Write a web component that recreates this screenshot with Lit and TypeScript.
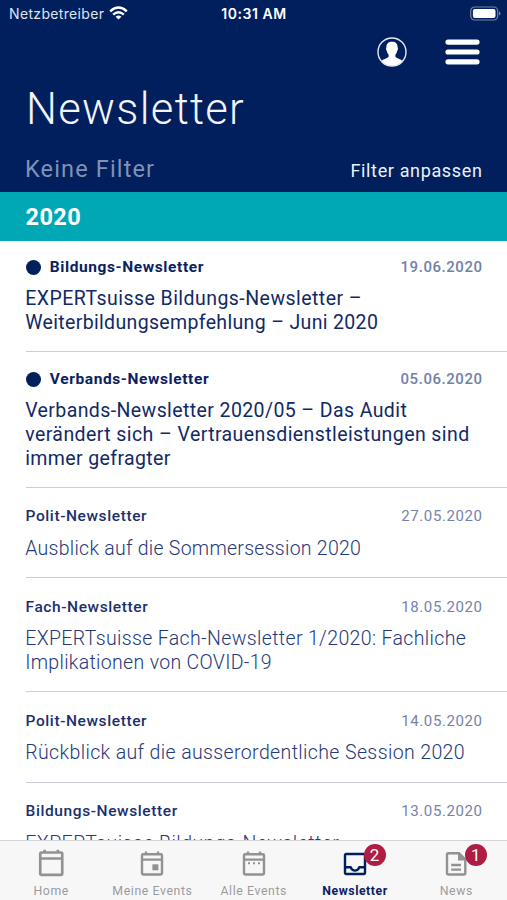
import { LitElement, html, css, svg, nothing } from "lit";
import { classMap } from "lit/directives/class-map.js";

interface Item {
  category: string;
  date: string;
  lines: string[];
  spacing: number[];
  unread?: boolean;
}

const ITEMS: Item[] = [
  { category: "Bildungs-Newsletter", date: "19.06.2020", unread: true,
    lines: ["EXPERTsuisse Bildungs-Newsletter –", "Weiterbildungsempfehlung – Juni 2020"], spacing: [0.46, 0.34] },
  { category: "Verbands-Newsletter", date: "05.06.2020", unread: true,
    lines: ["Verbands-Newsletter 2020/05 – Das Audit", "verändert sich – Vertrauensdienstleistungen sind", "immer gefragter"], spacing: [0.4, 0.42, 0.38] },
  { category: "Polit-Newsletter", date: "27.05.2020",
    lines: ["Ausblick auf die Sommersession 2020"], spacing: [0.27] },
  { category: "Fach-Newsletter", date: "18.05.2020",
    lines: ["EXPERTsuisse Fach-Newsletter 1/2020: Fachliche", "Implikationen von COVID-19"], spacing: [0.36, 0.32] },
  { category: "Polit-Newsletter", date: "14.05.2020",
    lines: ["Rückblick auf die ausserordentliche Session 2020"], spacing: [0.38] },
  { category: "Bildungs-Newsletter", date: "13.05.2020",
    lines: ["EXPERTsuisse Bildungs-Newsletter"], spacing: [0.46] },
];

const calendar = svg`<path d="M3.2 3.2H20.8Q22 3.2 22 4.4V22.3Q22 23.5 20.8 23.5H3.2Q2 23.5 2 22.3V4.4Q2 3.2 3.2 3.2ZM2 8.6H22M6 0.6V3M18 0.6V3"/>`;
const ICONS = {
  home: svg`${calendar}`,
  mine: svg`${calendar}<path class="solid" d="M12.4 13.3h6v6h-6z"/>`,
  all: svg`${calendar}<path class="solid" d="M6 11.2h2v2h-2zM11 11.2h2v2h-2zM16 11.2h2v2h-2z"/>`,
  inbox: svg`<path d="M3.4 3H20.6Q22 3 22 4.4V21.6Q22 23 20.6 23H3.4Q2 23 2 21.6V4.4Q2 3 3.4 3Z"/><path d="M2 16.3H7.6Q9 19.6 12 19.6Q15 19.6 16.4 16.3H22"/>`,
  news: svg`<path d="M4.5 2.2H15L21.3 8.6V22Q21.3 23.5 19.8 23.5H4.5Q3 23.5 3 22V3.7Q3 2.2 4.5 2.2Z"/><path class="solid" d="M14 2L21.5 9.6H14Z"/><path d="M7.2 14H17M7.2 18.6H17"/>`,
};

const TABS = [
  { label: "Home", icon: ICONS.home, cls: "home" },
  { label: "Meine Events", icon: ICONS.mine, cls: "mine" },
  { label: "Alle Events", icon: ICONS.all, cls: "all" },
  { label: "Newsletter", icon: ICONS.inbox, cls: "active", badge: 2 },
  { label: "News", icon: ICONS.news, cls: "news", badge: 1 },
];

class NewsletterRow extends LitElement {
  static properties = { item: { attribute: false } };
  declare item: Item;
  static styles = css`
    :host { display: block; padding-left: 25.5px; }
    .row { padding: 18.4px 25px 16.6px 0; border-bottom: 1px solid #c9cddd; }
    .row.unread { padding: 16.7px 25px 16.3px 0; }
    .meta { display: flex; align-items: center; height: 20px; font-size: 15.5px; line-height: 20px; }
    .dot { width: 15px; height: 15px; border-radius: 50%; background: #001f5c; margin-right: 9.3px; }
    .category { font-weight: 500; letter-spacing: 0.6px; color: #1a2f6b; }
    .date { margin-left: auto; font-size: 15px; letter-spacing: 0.6px; color: #7482ac; margin-right: -0.6px; }
    .unread .category { font-weight: 700; letter-spacing: 0.6px; color: #0a225f; }
    .unread .date { font-weight: 500; letter-spacing: 0.55px; color: #7280a8; }
    .title { margin-top: 10.5px; font-size: 19.5px; line-height: 23.8px; font-weight: 300; color: #24387a; white-space: nowrap; }
    .unread .title { margin-top: 10.3px; font-weight: 400; color: #112966; }
    .line { display: block; margin-left: -0.3px; }
  `;
  render() {
    const { category, date, lines, spacing, unread } = this.item;
    return html`<div class=${classMap({ row: true, unread: !!unread })}>
      <div class="meta">
        ${unread ? html`<span class="dot"></span>` : nothing}
        <span class="category">${category}</span>
        <span class="date">${date}</span>
      </div>
      <div class="title">
        ${lines.map((l, i) => html`<span class="line" style="letter-spacing:${spacing[i]}px">${l}</span>`)}
      </div>
    </div>`;
  }
}
customElements.define("newsletter-row", NewsletterRow);

class AppRoot extends LitElement {
  static styles = css`
    :host { display: flex; flex-direction: column; height: 900px; overflow: hidden; background: #fff; font-family: Roboto, "Liberation Sans", sans-serif; }
    header { background: #001f5c; color: #fff; height: 192px; flex: none; display: flex; flex-direction: column; }
    .status { display: grid; grid-template-columns: 1fr auto 1fr; align-items: center; height: 27px; padding: 0 6px 0 9px; font: 400 14px/27px Inter, sans-serif; }
    .carrier { display: flex; align-items: center; gap: 5px; letter-spacing: 0.34px; color: #dfe4f0; }
    .wifi { width: 19px; height: 14px; margin-top: -2px; }
    .time { font-weight: 600; letter-spacing: 0.55px; margin-right: 2px; }
    .battery { justify-self: end; width: 31px; height: 15px; }
    .actions { display: flex; justify-content: flex-end; align-items: center; gap: 38.5px; height: 50px; padding-right: 27px; }
    .user { width: 30px; height: 30px; }
    .burger { width: 35px; height: 26px; }
    h1 { margin: 2px 0 0 26px; font-weight: 300; font-size: 43.6px; line-height: 62px; letter-spacing: 1.3px; color: #f2f4fa; }
    .filters { display: flex; justify-content: space-between; align-items: baseline; padding: 0 24.5px 0 25px; height: 51px; line-height: 56px; }
    .state { font-size: 23.5px; letter-spacing: 1.15px; color: #8291b6; }
    .adjust { font-size: 18px; letter-spacing: 0.64px; color: #eef1f8; }
    .year { flex: none; height: 48.5px; background: #00a8b5; color: #fff; font-weight: 700; font-size: 23.5px; line-height: 51px; letter-spacing: 0.4px; padding-left: 25.5px; }
    main { flex: 1; min-height: 0; overflow: hidden; }
    nav { flex: none; height: 60px; box-sizing: border-box; border-top: 1px solid #d5d5d9; background: #f7f7f8; display: grid; grid-template-columns: repeat(5, 1fr); padding-left: 0.5px; }
    .tab { display: flex; flex-direction: column; align-items: center; color: #929294; }
    .glyph { position: relative; height: 40px; display: flex; align-items: center; justify-content: center; padding-top: 4px; box-sizing: border-box; }
    .icon { width: 24px; height: 25px; fill: none; stroke: currentColor; stroke-width: 2.4; overflow: visible; }
    .home .icon { width: 26.5px; height: 27.5px; }
    .icon .solid { fill: currentColor; stroke: none; }
    .label { font-size: 12.3px; line-height: 20px; letter-spacing: 0.6px; color: #9b9b9d; }
    .active { color: #001f5c; }
    .active .label { font-weight: 700; color: #0a225f; letter-spacing: 0.55px; }
    .badge { position: absolute; left: 20.5px; top: 3px; width: 22px; height: 22px; border-radius: 50%; background: #ae1d43; color: #fff; font: 400 17px/22px Roboto, sans-serif; text-align: center; }
  `;
  render() {
    return html`
      <header>
        <div class="status">
          <span class="carrier">Netzbetreiber
            <svg class="wifi" viewBox="0 0 19 14" fill="none" stroke="#fff" stroke-width="2.5">
              <path d="M1.2 5.3Q9.5 -2.3 17.8 5.3"/><path d="M4.2 8.6Q9.5 3.8 14.8 8.6"/>
              <path d="M9.5 13.6L6.6 10.7Q9.5 8.4 12.4 10.7Z" fill="#fff" stroke="none"/>
            </svg>
          </span>
          <span class="time">10:31 AM</span>
          <svg class="battery" viewBox="0 0 31 15">
            <rect x="0.7" y="1" width="27" height="13" rx="4" fill="none" stroke="#75839f" stroke-width="1.2"/>
            <rect x="2.9" y="3.1" width="22.6" height="8.8" rx="2" fill="#fff"/>
            <path d="M29 5.4Q30.6 6 30.6 7.5T29 9.6Z" fill="#75839f"/>
          </svg>
        </div>
        <div class="actions">
          <svg class="user" viewBox="0 0 30 30">
            <circle cx="15" cy="15" r="14" fill="none" stroke="#e3e8f3" stroke-width="1.4"/>
            <path d="M15 4.8C18.9 4.8 20.8 7 20.6 10.6C21.2 11 21 13.2 20.1 13.9C19.8 15.6 19.2 16.8 18.4 17.6V19.8C19.5 21.6 23.5 21.8 25.4 24A14 14 0 0 1 4.6 24C6.5 21.8 10.5 21.6 11.6 19.8V17.6C10.8 16.8 10.2 15.6 9.9 13.9C9 13.2 8.8 11 9.4 10.6C9.2 7 11.1 4.8 15 4.8Z" fill="#fff"/>
          </svg>
          <svg class="burger" viewBox="0 0 35 26" stroke="#fff" stroke-width="5.2" stroke-linecap="round">
            <path d="M3 3.1H32M3 13H32M3 22.8H32"/>
          </svg>
        </div>
        <h1>Newsletter</h1>
        <div class="filters"><span class="state">Keine Filter</span><span class="adjust">Filter anpassen</span></div>
      </header>
      <div class="year">2020</div>
      <main>${ITEMS.map((item) => html`<newsletter-row .item=${item}></newsletter-row>`)}</main>
      <nav>
        ${TABS.map((t) => html`<div class="tab ${t.cls}">
          <div class="glyph">
            <svg class="icon" viewBox="0 0 24 25">${t.icon}</svg>
            ${t.badge ? html`<span class="badge">${t.badge}</span>` : nothing}
          </div>
          <span class="label">${t.label}</span>
        </div>`)}
      </nav>
    `;
  }
}
customElements.define("app-root", AppRoot);
